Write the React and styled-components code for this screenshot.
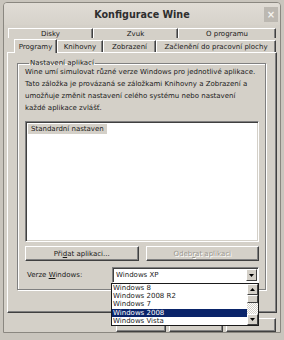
import React from 'react';
import styled, { createGlobalStyle } from 'styled-components';

const Global = createGlobalStyle`
  html, body {
    margin: 0;
    padding: 0;
    background: #c9c5bd;
  }
  body {
    font-family: "DejaVu Sans", "Liberation Sans", sans-serif;
    font-size: 7px;
    color: #1a1a1a;
  }
`;

const Window = styled.div`
  position: relative;
  width: 278px;
  height: 331px;
  margin: 2px 0 0 3px;
  background: #d4d0c8;
  border: 1px solid #8a8780;
  border-radius: 4px 4px 0 0;
  box-sizing: border-box;
  overflow: hidden;
`;

const TitleBar = styled.div`
  height: 22px;
  display: grid;
  grid-template-columns: 1fr auto 1fr;
  align-items: center;
  background: linear-gradient(#e0dcd5, #d6d2ca);
  font-weight: bold;
  font-size: 9.6px;
  color: #2e2e2e;
`;

const Close = styled.div`
  justify-self: end;
  margin-right: 2px;
  width: 14px;
  height: 15px;
  background: #bcb8b1;
  color: #f4f2ee;
  font-size: 10px;
  line-height: 15px;
  text-align: center;
`;

const Body = styled.div`
  padding: 3px 3px 0 3px;
`;

const TabRow = styled.div`
  display: flex;
  height: ${(p) => p.h}px;
  padding-left: ${(p) => p.pad}px;
  align-items: flex-end;
`;

const Tab = styled.div`
  width: ${(p) => p.w}px;
  height: ${(p) => (p.active ? 14 : p.h)}px;
  box-sizing: border-box;
  border-top: 1px solid #ffffff;
  border-left: 1px solid #ffffff;
  border-right: 1px solid #404040;
  box-shadow: inset -1px 0 0 #808080;
  display: flex;
  align-items: center;
  justify-content: center;
  background: #d4d0c8;
  position: relative;
  z-index: ${(p) => (p.active ? 2 : 1)};
  margin-bottom: ${(p) => (p.active ? -1 : 0)}px;
  white-space: nowrap;
`;

const Pane = styled.div`
  height: 261px;
  box-sizing: border-box;
  border-top: 1px solid #ffffff;
  border-left: 1px solid #ffffff;
  border-right: 1px solid #404040;
  border-bottom: 1px solid #404040;
  box-shadow: inset -1px -1px 0 #808080;
  padding: 6px 10px 0 9px;
  position: relative;
`;

const Group = styled.fieldset`
  margin: 0;
  height: 231px;
  box-sizing: border-box;
  border: 1px solid #808080;
  box-shadow: 1px 1px 0 #ffffff, inset 1px 1px 0 #ffffff;
  padding: 0 6px 0 7px;
  position: relative;
`;

const Legend = styled.legend`
  padding: 0 1px;
  margin-left: 4px;
  line-height: 8px;
`;

const Intro = styled.p`
  margin: -1px 0 0 0;
  line-height: 12px;
  white-space: nowrap;
`;

const ListBox = styled.div`
  margin-top: 7px;
  height: 121px;
  box-sizing: border-box;
  background: #ffffff;
  border-top: 1px solid #808080;
  border-left: 1px solid #808080;
  border-right: 1px solid #ffffff;
  border-bottom: 1px solid #ffffff;
  box-shadow: inset 1px 1px 0 #404040, inset -1px -1px 0 #d4d0c8;
  padding: 2px;
`;

const ListItem = styled.div`
  display: inline-block;
  background: #d4d0c8;
  padding: 0 3px;
  line-height: 10px;
`;

const ButtonRow = styled.div`
  display: grid;
  grid-template-columns: 1fr 1fr;
  gap: 7px;
  margin-top: 4px;
`;

const Button = styled.div`
  height: 15px;
  box-sizing: border-box;
  border-top: 1px solid #ffffff;
  border-left: 1px solid #ffffff;
  border-right: 1px solid #404040;
  border-bottom: 1px solid #404040;
  box-shadow: inset -1px -1px 0 #808080;
  display: flex;
  align-items: center;
  justify-content: center;
  color: ${(p) => (p.disabled ? '#9a978f' : '#1a1a1a')};
  text-shadow: ${(p) => (p.disabled ? '1px 1px 0 #ffffff' : 'none')};
`;

const U = styled.span`
  text-decoration: underline;
`;

const VersionRow = styled.div`
  display: flex;
  align-items: center;
  margin-top: 6px;
  padding-left: 2px;
`;

const Label = styled.div`
  width: 85px;
`;

const Combo = styled.div`
  position: relative;
  width: 147px;
  height: 16px;
  box-sizing: border-box;
  background: #ffffff;
  border-top: 1px solid #808080;
  border-left: 1px solid #808080;
  border-right: 1px solid #ffffff;
  border-bottom: 1px solid #ffffff;
  box-shadow: inset 1px 1px 0 #404040;
  display: flex;
  align-items: center;
  padding-left: 3px;
`;

const ArrowBox = styled.div`
  position: absolute;
  right: 1px;
  top: 1px;
  bottom: 1px;
  width: 11px;
  box-sizing: border-box;
  background: #d4d0c8;
  border-top: 1px solid #ffffff;
  border-left: 1px solid #ffffff;
  border-right: 1px solid #404040;
  border-bottom: 1px solid #404040;
  display: flex;
  align-items: center;
  justify-content: center;
`;

const Popup = styled.div`
  position: absolute;
  left: 103px;
  top: 230px;
  width: 148px;
  height: 43px;
  box-sizing: border-box;
  background: #ffffff;
  border: 1px solid #1a1a1a;
  display: flex;
  z-index: 5;
`;

const Options = styled.div`
  flex: 1;
`;

const Option = styled.div`
  height: 8.2px;
  line-height: 8.2px;
  padding-left: 1px;
  background: ${(p) => (p.sel ? '#0a246a' : 'transparent')};
  color: ${(p) => (p.sel ? '#ffffff' : '#1a1a1a')};
  white-space: nowrap;
`;

const Scroll = styled.div`
  width: 11px;
  display: flex;
  flex-direction: column;
  background-color: #f0eee9;
  background-image: repeating-conic-gradient(#d4d0c8 0 25%, #ffffff 0 50%);
  background-size: 2px 2px;
`;

const ScrollBtn = styled.div`
  height: ${(p) => p.h}px;
  box-sizing: border-box;
  background: #d4d0c8;
  border-top: 1px solid #ffffff;
  border-left: 1px solid #ffffff;
  border-right: 1px solid #404040;
  border-bottom: 1px solid #404040;
  display: flex;
  align-items: center;
  justify-content: center;
`;

const Gap = styled.div`
  flex: 1;
`;

const Footer = styled.div`
  display: flex;
  justify-content: flex-end;
  gap: 3px;
  padding: 5px 1px 0 0;
`;

const FootButton = styled(Button)`
  width: ${(p) => p.w}px;
  height: 14px;
`;

const Tri = ({ up }) => (
  <svg width="5" height="3" viewBox="0 0 5 3">
    <path d={up ? 'M0 3 L2.5 0 L5 3 Z' : 'M0 0 L5 0 L2.5 3 Z'} fill="#000" />
  </svg>
);

export default function App() {
  const versions = ['Windows 8', 'Windows 2008 R2', 'Windows 7', 'Windows 2008', 'Windows Vista'];
  return (
    <>
      <Global />
      <Window>
        <TitleBar>
          <span />
          <span>Konfigurace Wine</span>
          <Close>×</Close>
        </TitleBar>
        <Body>
          <TabRow h={10} pad={1}>
            <Tab w={85} h={10}>Disky</Tab>
            <Tab w={85} h={10}>Zvuk</Tab>
            <Tab w={98} h={10}>O programu</Tab>
          </TabRow>
          <TabRow h={14} pad={7}>
            <Tab w={43} h={12} active>Programy</Tab>
            <Tab w={46} h={12}>Knihovny</Tab>
            <Tab w={53} h={12}>Zobrazení</Tab>
            <Tab w={120} h={12}>Začlenění do pracovní plochy</Tab>
          </TabRow>
          <Pane>
            <Group>
              <Legend>Nastavení aplikací</Legend>
              <Intro>
                Wine umí simulovat různé verze Windows pro jednotlivé aplikace.<br />
                Tato záložka je provázaná se záložkami Knihovny a Zobrazení a<br />
                umožňuje změnit nastavení celého systému nebo nastavení<br />
                každé aplikace zvlášť.
              </Intro>
              <ListBox>
                <ListItem>Standardní nastaven</ListItem>
              </ListBox>
              <ButtonRow>
                <Button>Při<U>d</U>at aplikaci...</Button>
                <Button disabled>Odeb<U>r</U>at aplikaci</Button>
              </ButtonRow>
              <VersionRow>
                <Label>Verze <U>W</U>indows:</Label>
                <Combo>
                  Windows XP
                  <ArrowBox><Tri /></ArrowBox>
                </Combo>
              </VersionRow>
            </Group>
            <Popup>
              <Options>
                {versions.map((v) => (
                  <Option key={v} sel={v === 'Windows 2008'}>{v}</Option>
                ))}
              </Options>
              <Scroll>
                <ScrollBtn h={11}><Tri up /></ScrollBtn>
                <ScrollBtn h={8} />
                <Gap />
                <ScrollBtn h={11}><Tri /></ScrollBtn>
              </Scroll>
            </Popup>
          </Pane>
          {/* OK / Storno / Použít – labels sit under the open popup */}
          <Footer>
            <FootButton w={50} />
            <FootButton w={54} />
            <FootButton w={50} />
          </Footer>
        </Body>
      </Window>
    </>
  );
}
